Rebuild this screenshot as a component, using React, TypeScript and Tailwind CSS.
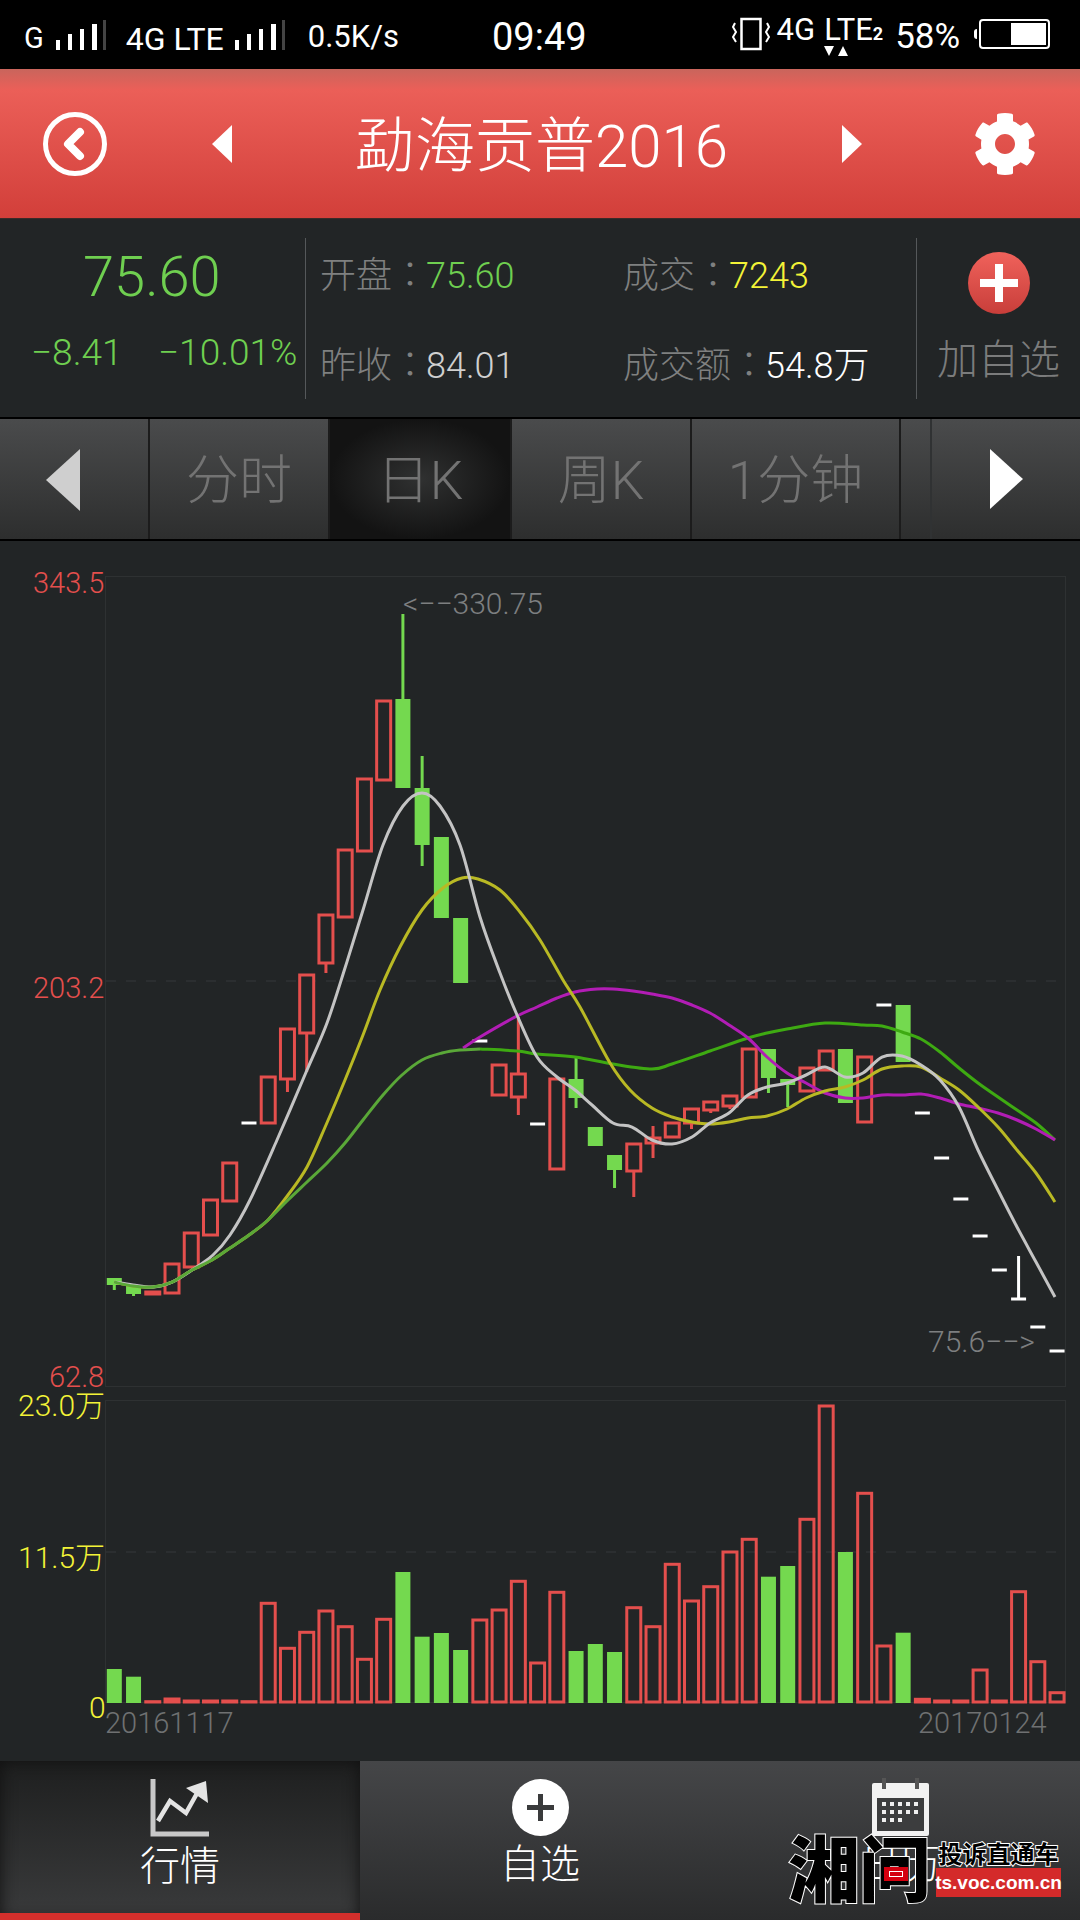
import { FaCog } from "react-icons/fa"

const RED = "#e44f4d"
const GREEN = "#74d94f"

type Candle = { t: "r" | "g" | "d"; a: number; b?: number; hi?: number; lo?: number }

const candles: Candle[] = [
    { t: "g", a: 1278, b: 1285, lo: 1290 },
    { t: "g", a: 1286, b: 1294, lo: 1296 },
    { t: "r", a: 1292, b: 1294 },
    { t: "r", a: 1264, b: 1293 },
    { t: "r", a: 1233, b: 1267 },
    { t: "r", a: 1200, b: 1235 },
    { t: "r", a: 1163, b: 1201 },
    { t: "d", a: 1123 },
    { t: "r", a: 1077, b: 1123 },
    { t: "r", a: 1029, b: 1079, lo: 1092 },
    { t: "r", a: 975, b: 1033, lo: 1072 },
    { t: "r", a: 915, b: 963, lo: 973 },
    { t: "r", a: 850, b: 917 },
    { t: "r", a: 779, b: 851 },
    { t: "r", a: 701, b: 780 },
    { t: "g", a: 699, b: 788, hi: 614 },
    { t: "g", a: 788, b: 845, hi: 756, lo: 866 },
    { t: "g", a: 837, b: 918 },
    { t: "g", a: 918, b: 983 },
    { t: "d", a: 1041 },
    { t: "r", a: 1065, b: 1095 },
    { t: "r", a: 1074, b: 1097, hi: 1017, lo: 1115 },
    { t: "d", a: 1124 },
    { t: "r", a: 1079, b: 1169 },
    { t: "g", a: 1079, b: 1098, hi: 1057, lo: 1108 },
    { t: "g", a: 1127, b: 1146 },
    { t: "g", a: 1155, b: 1170, lo: 1188 },
    { t: "r", a: 1144, b: 1171, lo: 1197 },
    { t: "r", a: 1138, b: 1143, hi: 1126, lo: 1158 },
    { t: "r", a: 1123, b: 1137 },
    { t: "r", a: 1109, b: 1123, lo: 1129 },
    { t: "r", a: 1102, b: 1110, lo: 1113 },
    { t: "r", a: 1096, b: 1106, lo: 1109 },
    { t: "r", a: 1049, b: 1097 },
    { t: "g", a: 1049, b: 1078, lo: 1093 },
    { t: "g", a: 1079, b: 1085, lo: 1107 },
    { t: "r", a: 1068, b: 1091 },
    { t: "r", a: 1051, b: 1070 },
    { t: "g", a: 1049, b: 1103 },
    { t: "r", a: 1057, b: 1122 },
    { t: "d", a: 1005 },
    { t: "g", a: 1005, b: 1062 },
    { t: "d", a: 1113 },
    { t: "d", a: 1158 },
    { t: "d", a: 1199 },
    { t: "d", a: 1236 },
    { t: "d", a: 1270 },
    { t: "d", a: 1299, hi: 1256 },
    { t: "d", a: 1327 },
    { t: "d", a: 1351 },
]

// tops of the volume bars, green ones are filled
const volumes = [
    1669, 1676.7, 1701.7, 1699, 1701, 1701, 1701, 1701.7, 1603.3, 1648.3, 1632.3, 1611, 1626.7, 1659.3, 1619.3,
    1572, 1636.7, 1633, 1650, 1620, 1610, 1581.3, 1663, 1592.3, 1651, 1644, 1652, 1607.7, 1626.7, 1564.3, 1601,
    1586.7, 1552, 1539.3, 1576.7, 1566, 1519.3, 1406, 1552, 1493.3, 1646, 1632.7, 1699.3, 1701, 1701, 1670, 1701,
    1591.7, 1661.7, 1692.7,
]
const greenVolumes = [0, 1, 15, 16, 17, 18, 24, 25, 26, 34, 35, 38, 41]

const maWhite = "114,1282 133,1285 153,1287 172,1282 192,1270 213,1255 230,1235 250,1200 277,1140 307,1070 327,1023 345,968 363,910 383,845 403,806 422,793 440,806 460,845 480,917 500,973 517,1015 537,1057 557,1077 575,1090 592,1105 613,1123 632,1127 652,1140 672,1144 692,1137 710,1123 729,1113 748,1095 767,1087 787,1083 806,1075 825,1067 845,1077 863,1073 882,1057 902,1056 921,1065 940,1080 959,1107 978,1150 998,1190 1017,1227 1036,1262 1055,1297"
const maYellow = "114,1282 133,1286 153,1287 172,1282 192,1270 212,1260 230,1248 249,1235 268,1220 288,1195 307,1167 326,1125 345,1080 363,1035 380,990 400,947 422,910 443,888 462,878 478,879 500,890 520,912 540,940 563,980 580,1007 610,1063 630,1090 652,1108 672,1117 692,1122 710,1124 729,1122 748,1118 767,1116 787,1109 806,1098 825,1091 845,1087 863,1080 882,1069 902,1066 921,1067 940,1078 959,1090 978,1107 998,1127 1017,1150 1036,1173 1055,1202"
const maGreen = "114,1282 133,1286 153,1287 172,1282 192,1270 212,1260 230,1248 249,1235 268,1220 288,1200 307,1182 327,1163 345,1143 363,1120 383,1095 402,1075 422,1060 442,1053 460,1050 480,1049 517,1051 537,1054 575,1057 613,1064 652,1069 672,1064 710,1051 748,1038 767,1033 787,1029 825,1023 863,1025 882,1026 902,1032 921,1039 940,1052 959,1068 978,1083 998,1097 1017,1110 1036,1123 1055,1140"
const maPurple = "463,1048 480,1037 517,1016 537,1007 557,998 575,992 597,989 613,989 633,991 652,994 672,998 692,1005 710,1013 729,1025 748,1038 767,1057 787,1073 806,1083 825,1093 845,1098 863,1098 882,1095 902,1095 921,1094 940,1098 959,1104 978,1108 998,1113 1017,1120 1036,1129 1055,1140"

const xAt = (i: number) => 114.3 + i * 19.24

// catmull-rom through the read-off points, the lines in the picture are smooth
const smooth = (points: string[]) => {
    const p = points.map((s) => s.split(",").map(Number))
    let d = `M${p[0][0]} ${p[0][1]}`
    for (let i = 0; i < p.length - 1; i++) {
        const p0 = p[Math.max(i - 1, 0)]
        const p1 = p[i]
        const p2 = p[i + 1]
        const p3 = p[Math.min(i + 2, p.length - 1)]
        const c1x = p1[0] + (p2[0] - p0[0]) / 6
        const c1y = p1[1] + (p2[1] - p0[1]) / 6
        const c2x = p2[0] - (p3[0] - p1[0]) / 6
        const c2y = p2[1] - (p3[1] - p1[1]) / 6
        d += `C${c1x} ${c1y} ${c2x} ${c2y} ${p2[0]} ${p2[1]}`
    }
    return d
}

function Signal() {
    return (
        <svg width="50" height="32" viewBox="0 0 50 32">
            <rect x="0" y="20" width="4" height="10" fill="#fff" />
            <rect x="12" y="14" width="4" height="16" fill="#fff" />
            <rect x="24" y="9" width="4" height="21" fill="#fff" />
            <rect x="36" y="4" width="5" height="26" fill="#fff" />
            <rect x="47" y="0" width="3" height="30" fill="#444" />
        </svg>
    )
}

function StatusBar() {
    return (
        <div className="h-[69px] bg-black flex items-center text-white leading-none shrink-0">
            <span className="ml-[24px] mt-[8px] text-[29px]">G</span>
            <div className="ml-[12px] mt-[2px]"><Signal /></div>
            <span className="ml-[20px] mt-[8px] text-[32px]">4G LTE</span>
            <div className="ml-[11px] mt-[2px]"><Signal /></div>
            <span className="ml-[23px] mt-[4px] text-[31px]">0.5K/s</span>
            <span className="ml-[93px] mt-[4px] text-[38px]">09:49</span>
            <svg className="ml-[144px] -mt-[2px]" width="40" height="34" viewBox="0 0 40 34" fill="none" stroke="#fff">
                <rect x="10.5" y="2" width="19" height="30" strokeWidth="2.5" />
                <path d="M4 6l-2 4 3 5-3 5 3 5M36 6l2 4-3 5 3 5-3 5" strokeWidth="2" />
            </svg>
            <div className="relative ml-[6px] -mt-[10px] flex items-start text-[31px]">
                <span>4G</span>
                <span className="ml-[9px]">LTE</span>
                <span className="text-[18px] font-bold mt-[11px]">2</span>
                <svg className="absolute left-[45px] top-[31px]" width="28" height="12" viewBox="0 0 28 12" fill="#fff">
                    <path d="M2 1h10l-5 10zM16 11h10l-5-10z" />
                </svg>
            </div>
            <span className="ml-[12px] mt-[4px] text-[35px]">58%</span>
            <div className="ml-[14px] -mt-[2px] w-[3px] h-[10px] bg-white rounded-l-sm" />
            <div className="ml-[2px] -mt-[2px] w-[71px] h-[30px] border-2 border-white rounded-[4px] p-[2px] flex justify-end">
                <div className="w-[35px] bg-white" />
            </div>
        </div>
    )
}

function Header() {
    return (
        <div className="h-[150px] shrink-0 flex items-center text-white bg-[linear-gradient(#c9655c_0%,#eb5f58_14%,#d23f3a_100%)] border-b border-[#3a2a28]">
            <svg className="ml-[43px]" width="64" height="64" viewBox="0 0 64 64" fill="none" stroke="#fff">
                <circle cx="32" cy="32" r="29.5" strokeWidth="5" />
                <path d="M37 20 25 32l12 12" strokeWidth="8" strokeLinejoin="round" strokeLinecap="round" />
            </svg>
            <svg className="ml-[105px]" width="20" height="38" viewBox="0 0 20 38" fill="#fff"><path d="M20 0v38L0 19z" /></svg>
            <div className="ml-[123px] mt-[7px] w-[370px] text-[60px] font-light leading-none whitespace-nowrap">勐海贡普2016</div>
            <svg className="ml-[117px]" width="20" height="38" viewBox="0 0 20 38" fill="#fff"><path d="M0 0v38l20-19z" /></svg>
            <FaCog className="ml-[111px] text-white" size={64} />
        </div>
    )
}

function Colon() {
    return <span className="font-[family-name:'Noto_Sans_CJK_TC',sans-serif] -mr-[2px]">：</span>
}

function InfoPanel() {
    return (
        <div className="h-[198px] shrink-0 flex items-center bg-[#222526] leading-none">
            <div className="w-[305px] pl-[31px] pb-[16px]">
                <div className="ml-[52px] text-[56px] font-light text-[#6fcf50]">75.60</div>
                <div className="mt-[29px] flex text-[37px] font-light text-[#6fcf50] whitespace-nowrap">
                    <span className="w-[127px]">−8.41</span>
                    <span>−10.01%</span>
                </div>
            </div>
            <div className="w-px h-[161px] bg-[#55585a]" />
            <div className="w-[610px] pl-[14px] pt-[2px] flex flex-col gap-[50px] text-[36px] font-light text-[#7f8080]">
                <div className="flex">
                    <div className="w-[303px]">开盘<Colon /><span className="text-[#6fcf50]">75.60</span></div>
                    <div>成交<Colon /><span className="text-[#f3f337]">7243</span></div>
                </div>
                <div className="flex">
                    <div className="w-[303px]">昨收<Colon /><span className="text-[#d0d0d0]">84.01</span></div>
                    <div>成交额<Colon /><span className="text-white">54.8万</span></div>
                </div>
            </div>
            <div className="w-px h-[161px] bg-[#55585a]" />
            <div className="flex-1 flex flex-col items-center pb-[3px]">
                <div className="w-[62px] h-[62px] rounded-full bg-[linear-gradient(#f0625b,#c83e3a)] flex items-center justify-center">
                    <svg width="38" height="38" viewBox="0 0 38 38" fill="#fff"><path d="M15 0h8v15h15v8H23v15h-8V23H0v-8h15z" /></svg>
                </div>
                <div className="mt-[26px] text-[41px] font-light text-[#7b7c7c]">加自选</div>
            </div>
        </div>
    )
}

function Tabs() {
    const tabClass = "h-full flex items-center justify-center pt-[4px] text-[53px] font-light text-[#737373] border-l-2 border-[#1c1c1c]"
    return (
        <div className="h-[124px] shrink-0 flex border-y-2 border-black bg-[linear-gradient(#4a4b4c,#2d2e2e)] leading-none">
            <div className="w-[148px] h-full flex items-center pl-[46px]">
                <svg className="mt-[2px]" width="34" height="62" viewBox="0 0 34 62" fill="#cfcfcf"><path d="M34 0v62L0 31z" /></svg>
            </div>
            <div className={`${tabClass} w-[180px]`}>分时</div>
            <div className={`${tabClass} w-[182px] bg-[radial-gradient(closest-side,#303131,#131313)]`}>日K</div>
            <div className={`${tabClass} w-[180px]`}>周K</div>
            <div className={`${tabClass} w-[209px]`}>1分钟</div>
            <div className="w-[31px] h-full border-l-2 border-[#1c1c1c]" />
            <div className="flex-1 h-full flex items-center pl-[58px] border-l-2 border-[#303233]">
                <svg width="33" height="60" viewBox="0 0 33 60" fill="#fff"><path d="M0 0v60l33-30z" /></svg>
            </div>
        </div>
    )
}

function Chart() {
    const greenPoints = maGreen.split(" ")
    return (
        <svg className="block shrink-0" width="1080" height="1220" viewBox="0 541 1080 1220" fontWeight="300">
            <rect x="105.5" y="576.5" width="960" height="810" fill="none" stroke="#2e3132" />
            <rect x="105.5" y="1400.5" width="960" height="302" fill="none" stroke="#2e3132" />
            <line x1="106" x2="1065" y1="981" y2="981" stroke="#34383a" strokeDasharray="10 10" />
            <line x1="106" x2="1065" y1="1552" y2="1552" stroke="#34383a" strokeDasharray="10 10" />

            {candles.map((c, i) => {
                const x = xAt(i)
                if (c.t === "d") {
                    return (
                        <g key={i} stroke="#fff" strokeWidth="3">
                            <line x1={x - 7.5} x2={x + 7.5} y1={c.a} y2={c.a} />
                            {c.hi && <line x1={x} x2={x} y1={c.hi} y2={c.a} />}
                        </g>
                    )
                }
                const color = c.t === "r" ? RED : GREEN
                return (
                    <g key={i}>
                        {c.hi && <line x1={x} x2={x} y1={c.hi} y2={c.a} stroke={color} strokeWidth="3" />}
                        {c.lo && <line x1={x} x2={x} y1={c.b} y2={c.lo} stroke={color} strokeWidth="3" />}
                        {c.t === "r"
                            ? <rect x={x - 7} y={c.a} width="14" height={c.b! - c.a} fill="#222526" stroke={color} strokeWidth="3" />
                            : <rect x={x - 7.5} y={c.a} width="15" height={c.b! - c.a} fill={color} />}
                    </g>
                )
            })}

            <g fill="none" strokeWidth="3" strokeLinejoin="round">
                <path d={smooth(greenPoints.slice(19))} stroke="#3eaa12" />
                <path d={smooth(maPurple.split(" "))} stroke="#b21db5" />
                <path d={smooth(maYellow.split(" "))} stroke="#b9b924" />
                <path d={smooth(maWhite.split(" "))} stroke="#c4c4c4" />
                <path d={smooth(greenPoints.slice(0, 20))} stroke="#5aa838" />
            </g>

            {volumes.map((top, i) => {
                const x = xAt(i)
                if (greenVolumes.includes(i)) {
                    return <rect key={i} x={x - 7.5} y={top} width="15" height={1703 - top} fill={GREEN} />
                }
                return <rect key={i} x={x - 7} y={top} width="14" height={1702 - top} fill="none" stroke={RED} strokeWidth="3" />
            })}

            <g fontSize="29" fill={RED}>
                <text x="33" y="593">343.5</text>
                <text x="33" y="998">203.2</text>
                <text x="49" y="1387">62.8</text>
            </g>
            <g fontSize="30" fill="#f3f337">
                <text x="18" y="1416">23.0万</text>
                <text x="18" y="1568">11.5万</text>
                <text x="89" y="1718">0</text>
            </g>
            <g fontSize="29" fill="#6f7172">
                <text x="105" y="1733">20161117</text>
                <text x="918" y="1733">20170124</text>
            </g>
            <g fontSize="30" fill="#7d7f80">
                <text x="403" y="614">&lt;−−330.75</text>
                <text x="928" y="1352">75.6−−&gt;</text>
            </g>
        </svg>
    )
}

function BottomBar() {
    return (
        <div className="relative h-[159px] shrink-0 flex text-white leading-none bg-[linear-gradient(#454648,#2a2b2c)]">
            <div className="w-[360px] relative flex flex-col items-center pt-[18px] bg-[linear-gradient(#1e1f1f,#3a3b3c)] shadow-[inset_0_0_16px_#111]">
                <svg width="60" height="58" viewBox="0 0 60 58" fill="none" stroke="#c8c8c8">
                    <path d="M3 0v55h56" strokeWidth="5" />
                    <path d="M8 42 20 22l16 12L50 9" strokeWidth="4.5" stroke="#e4e4e4" />
                    <path d="M36 9l20-7 2 22z" fill="#e4e4e4" stroke="none" />
                </svg>
                <div className="mt-[10px] text-[40px] font-light">行情</div>
                <div className="absolute left-0 right-0 bottom-0 h-[7px] bg-[#d42f2c]" />
            </div>
            <div className="w-[360px] flex flex-col items-center pt-[18px]">
                <svg width="57" height="57" viewBox="0 0 57 57">
                    <circle cx="28.5" cy="28.5" r="28.5" fill="#fff" />
                    <path d="M26 15h5v11h11v5H31v11h-5V31H15v-5h11z" fill="#3a3b3c" />
                </svg>
                <div className="mt-[9px] text-[40px] font-light">自选</div>
            </div>
            <div className="w-[360px] flex flex-col items-center pt-[17px]">
                <svg width="57" height="58" viewBox="0 0 57 58">
                    <rect x="0" y="5" width="57" height="53" rx="2" fill="#f2f2f2" />
                    <rect x="5" y="20" width="47" height="33" fill="#3c3d3e" />
                    <rect x="10" y="0" width="4" height="11" fill="#555" />
                    <rect x="43" y="0" width="4" height="11" fill="#555" />
                    {[0, 1, 2, 3, 4].map((c) => <rect key={c} x={10 + c * 8} y="24" width="4" height="4" fill="#eee" />)}
                    {[0, 1, 2, 3, 4].map((c) => <rect key={c} x={10 + c * 8} y="32" width="4" height="4" fill="#eee" />)}
                    {[0, 1, 2].map((c) => <rect key={c} x={10 + c * 8} y="40" width="4" height="4" fill="#eee" />)}
                </svg>
                <div className="mt-[9px] text-[40px] font-light">日历</div>
            </div>

            <div className="absolute left-[788px] top-[68px] text-[72px] font-black text-black [-webkit-text-stroke:2px_#fff] [paint-order:stroke_fill] tracking-[-1px] font-[family-name:'Noto_Sans_CJK_SC',sans-serif]">
                湘问
            </div>
            <div className="absolute left-[884px] top-[106px] w-[24px] h-[14px] bg-[#d4000f] flex items-center justify-center">
                <div className="w-[14px] h-[6px] border border-white" />
            </div>
            <div className="absolute left-[936px] top-[80px] w-[125px] flex flex-col items-center">
                <div className="text-[24px] font-bold text-black [-webkit-text-stroke:2px_#fff] [paint-order:stroke_fill] whitespace-nowrap font-[family-name:'Noto_Sans_CJK_SC',sans-serif]">投诉直通车</div>
                <div className="mt-[3px] w-[125px] h-[29px] bg-[#d42a2a] flex items-center justify-center text-[19px] font-bold text-white font-[family-name:'Liberation_Sans',sans-serif]">ts.voc.com.cn</div>
            </div>
        </div>
    )
}

const App = () => {
    return (
        <div className="w-[1080px] h-[1920px] overflow-hidden flex flex-col bg-[#222526] font-[family-name:Roboto,'Noto_Sans_CJK_SC',sans-serif]">
            <StatusBar />
            <Header />
            <InfoPanel />
            <Tabs />
            <Chart />
            <BottomBar />
        </div>
    )
}

export default App
